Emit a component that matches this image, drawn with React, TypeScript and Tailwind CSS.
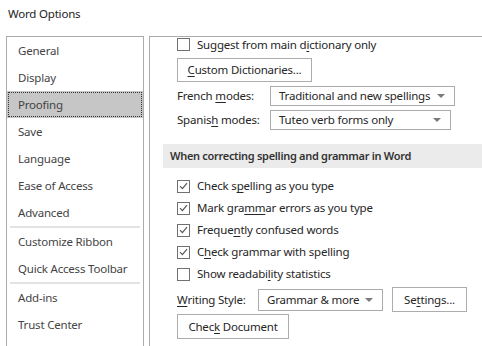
import React from "react";

const FONT = { fontFamily: '"Noto Sans", "Open Sans", sans-serif' };

type NavItem = { label: string; selected?: boolean; sep?: boolean };

const nav: NavItem[] = [
  { label: "General" },
  { label: "Display" },
  { label: "Proofing", selected: true },
  { label: "Save" },
  { label: "Language" },
  { label: "Ease of Access" },
  { label: "Advanced", sep: true },
  { label: "Customize Ribbon" },
  { label: "Quick Access Toolbar", sep: true },
  { label: "Add-ins" },
  { label: "Trust Center" },
];

function U({ children }: { children: React.ReactNode }) {
  return <span className="underline underline-offset-[2px]">{children}</span>;
}

function Checkbox({ checked }: { checked?: boolean }) {
  return (
    <span className="flex h-[13px] w-[13px] shrink-0 items-center justify-center border border-[#707070] bg-white">
      {checked && (
        <svg width="9" height="8" viewBox="0 0 9 8">
          <path d="M1 4.2 L3.4 6.6 L8 1.2" fill="none" stroke="#555" strokeWidth="1.2" />
        </svg>
      )}
    </span>
  );
}

function CheckRow({ checked, children }: { checked?: boolean; children: React.ReactNode }) {
  return (
    <div className="flex h-[22px] items-center gap-[7px] pl-[27px]">
      <Checkbox checked={checked} />
      <span>{children}</span>
    </div>
  );
}

function Arrow() {
  return (
    <svg width="8" height="4" viewBox="0 0 8 4" className="shrink-0">
      <path d="M0 0 H8 L4 4 Z" fill="#7a7a7a" />
    </svg>
  );
}

function Select({ value, className }: { value: string; className: string }) {
  return (
    <div className={`flex items-center justify-between whitespace-nowrap border border-[#ababab] bg-white pl-[8px] pr-[9px] ${className}`}>
      <span>{value}</span>
      <Arrow />
    </div>
  );
}

function Button({ children, className }: { children: React.ReactNode; className: string }) {
  return (
    <div className={`flex items-center justify-center whitespace-nowrap border border-[#adadad] bg-white ${className}`}>
      {children}
    </div>
  );
}

export default function App() {
  return (
    <div
      className="h-[346px] w-[482px] overflow-hidden whitespace-nowrap bg-white text-[11.5px] tracking-[-0.2px] text-[#262626]"
      style={FONT}
    >
      <div className="flex h-[36px] items-start pl-[8px] pt-[5px] text-[#222]">Word Options</div>

      <div className="flex h-[310px]">
        {/* Nav */}
        <div className="ml-[6px] w-[138px] border-l border-r border-t border-[#ababab] text-[#444]">
          {nav.map((n) => (
            <div key={n.label}>
              <div className={`h-[27px] ${n.selected ? "bg-[#c6c6c6] p-px" : ""}`}>
                <div
                  className={`flex h-full items-center ${
                    n.selected ? "border border-dotted border-[#333] pl-[9px]" : "pl-[11px]"
                  }`}
                >
                  {n.label}
                </div>
              </div>
              {n.sep && <div className="mx-[3px] h-[2px] bg-[#e3e3e3]" />}
            </div>
          ))}
        </div>

        {/* Content */}
        <div className="ml-[5px] flex-1 border-l border-t border-[#ababab]">
          <div className="mt-px flex h-[13px] items-center gap-[7px] pl-[27px]">
            <Checkbox />
            <span>
              Suggest from main d<U>i</U>ctionary only
            </span>
          </div>

          <div className="pl-[27px] pt-[7px]">
            <Button className="h-[24px] w-[135px]">
              <span>
                <U>C</U>ustom Dictionaries...
              </span>
            </Button>
          </div>

          <div className="mt-[4px] flex h-[20px] items-center pl-[27px]">
            <span className="w-[93px]">
              French <U>m</U>odes:
            </span>
            <Select value="Traditional and new spellings" className="h-[20px] w-[185px]" />
          </div>
          <div className="mt-[4px] flex h-[20px] items-center pl-[27px]">
            <span className="w-[93px]">
              Spanis<U>h</U> modes:
            </span>
            <Select value="Tuteo verb forms only" className="h-[20px] w-[181px]" />
          </div>

          <div className="ml-[13px] mt-[14px] flex h-[24px] items-center bg-[#ebebeb] pl-[7px] text-[11px] font-semibold tracking-[-0.3px] text-[#333]">
            When correcting spelling and grammar in Word
          </div>

          <div className="mt-[7px]">
            <CheckRow checked>
              Check s<U>p</U>elling as you type
            </CheckRow>
            <CheckRow checked>
              Mark gra<U>mm</U>ar errors as you type
            </CheckRow>
            <CheckRow checked>
              Freque<U>n</U>tly confused words
            </CheckRow>
            <CheckRow checked>
              C<U>h</U>eck grammar with spelling
            </CheckRow>
            <CheckRow>
              Show readabi<U>l</U>ity statistics
            </CheckRow>
          </div>

          <div className="mt-[2px] flex h-[25px] items-center pl-[27px]">
            <span className="w-[81px]">
              <U>W</U>riting Style:
            </span>
            <Select value="Grammar & more" className="h-[22px] w-[125px]" />
            <Button className="ml-[9px] h-[25px] w-[75px]">
              <span>
                Se<U>t</U>tings...
              </span>
            </Button>
          </div>

          <div className="mt-[2px] pl-[27px]">
            <Button className="h-[25px] w-[112px]">
              <span>
                Chec<U>k</U> Document
              </span>
            </Button>
          </div>
        </div>
      </div>
    </div>
  );
}
